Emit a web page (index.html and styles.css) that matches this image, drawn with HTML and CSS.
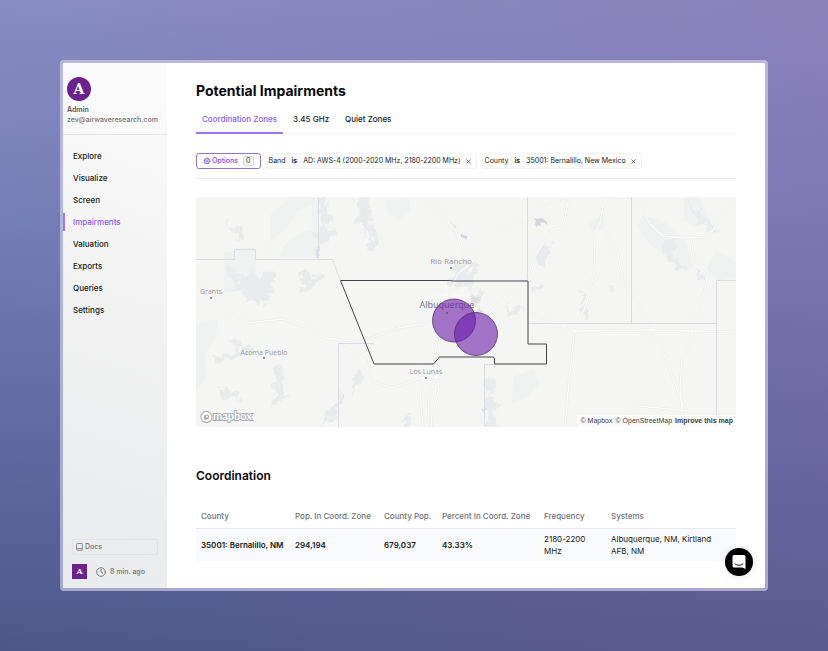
FILE: index.html
```
<!DOCTYPE html>
<html lang="en">
<head>
  <meta charset="UTF-8">
  <meta name="viewport" content="width=device-width, initial-scale=1">
  <title>Potential Impairments</title>
  <link rel="stylesheet" href="styles.css">
</head>
<body>
  <div class="window">
    <aside class="sidebar">
      <div class="account">
        <div class="avatar">A</div>
        <strong>Admin</strong>
        <span>zev@airwaveresearch.com</span>
      </div>
      <nav class="menu">
        <a href="#">Explore</a>
        <a href="#">Visualize</a>
        <a href="#">Screen</a>
        <a href="#" class="active">Impairments</a>
        <a href="#">Valuation</a>
        <a href="#">Exports</a>
        <a href="#">Queries</a>
        <a href="#">Settings</a>
      </nav>
      <div class="sidebar-bottom">
        <a href="#" class="docs">
          <svg width="7" height="8" viewBox="0 0 7 8" fill="none" stroke="currentColor" stroke-width="0.8">
            <path d="M1.500.5h4.200q.6 0 .6.6v6.200H1.600Q.6 7.300.6 6.400V1.400Q.6.5 1.500.5zM.7 6.200q.2-.7.9-.7h4.700"/>
          </svg>
          Docs
        </a>
        <div class="status">
          <div class="badge">A</div>
          <svg width="10" height="10" viewBox="0 0 10 10" fill="none" stroke="currentColor" stroke-width="0.9" stroke-linecap="round">
            <circle cx="5" cy="5" r="4.300"/>
            <path d="M5 2.300V5l1.700 1"/>
          </svg>
          <span>8 min. ago</span>
        </div>
      </div>
    </aside>

    <main class="main">
      <h1>Potential Impairments</h1>

      <nav class="tabs">
        <a href="#" class="active">Coordination Zones</a>
        <a href="#">3.45 GHz</a>
        <a href="#">Quiet Zones</a>
      </nav>

      <div class="filters">
        <button class="options">
          <svg width="8" height="8" viewBox="0 0 8 8" fill="none" stroke="currentColor">
            <circle cx="4" cy="4" r="2.900" stroke-width="1" stroke-dasharray="1.500 0.780"/>
            <circle cx="4" cy="4" r="2.400" stroke-width="0.700"/>
            <circle cx="4" cy="4" r="0.900" stroke-width="0.700"/>
          </svg>
          Options
          <span class="count">0</span>
        </button>
        <div class="chip">
          <span>Band</span><b>is</b><span>AD: AWS-4 (2000-2020 MHz, 2180-2200 MHz)</span>
          <button aria-label="Remove band filter">
            <svg width="5" height="5" viewBox="0 0 5 5" stroke="currentColor" stroke-width="0.700"><path d="M.5.5l4 4M4.500.5l-4 4"/></svg>
          </button>
        </div>
        <div class="chip">
          <span>County</span><b>is</b><span>35001: Bernalillo, New Mexico</span>
          <button aria-label="Remove county filter">
            <svg width="5" height="5" viewBox="0 0 5 5" stroke="currentColor" stroke-width="0.700"><path d="M.5.5l4 4M4.500.5l-4 4"/></svg>
          </button>
        </div>
      </div>

      <div class="map">
        <svg class="map-canvas" viewBox="0 0 540 230" role="img" aria-label="Coordination zones near Albuquerque">
          <defs>
            <filter id="rough" x="-5%" y="-5%" width="110%" height="110%">
              <feTurbulence type="fractalNoise" baseFrequency="0.120" numOctaves="3" seed="4"/>
              <feDisplacementMap in="SourceGraphic" scale="14" xChannelSelector="R" yChannelSelector="G"/>
              <feGaussianBlur stdDeviation="0.700"/>
            </filter>
          </defs>
          <rect width="540" height="230" fill="#f5f5f4"/>

          <!-- public land and lava fields -->
          <g fill="#f0f1f1">
            <path d="M95 0h27v60H82q8-22 34-27V8l-14 6-10 16-18 15-1 18H60v32H28V55h11v-4h20v11h15V18z"/>
            <path d="M190 4l22-3 3 12-13 11-10-8z"/>
            <path d="M446 17l23 8 19 17 10 28-8 4-21-14-19-17-8-14z"/>
            <path d="M488 0h17l7 18 10 18-15-9-8 3-11-6zM520 54l22 12v13l-20 5-12-10z"/>
            <path d="M392 26l15-9 2 14-14 4zM0 127l22-5-2 18-10 16-1 26-9 14z"/>
            <path d="M317 180l21-8 6 14-14 15-14 6z"/>
          </g>
          <!-- terrain shading -->
          <g fill="#e9ebed" filter="url(#rough)">
            <path d="M29 22l6 9 8-3 7 9-5 6-6-5-4-7-6-2zM28 64l12 14 8 3 6-5 7 1 1 5 10-7 10 2-6 8 3 8-8 4 2 8-11 2-6-5-5 2-3-10-11-1 5-7-12-11z"/>
            <path d="M127 0l6 8-3 8 8 3-2 8-7-3 1 11 10-3-2 9-13 4-4 18-3-2 2-22 6-14-3-12z"/>
            <path d="M103 74l8-3 1 14 9-9 7 4-11 9-6 9-8-2 5-8z"/>
            <path d="M160 3l4 10-5 10 7 6 1 11 6-3 2 8-7 5 7 4 7-8-3-16-6-4 3-12-5-11-5-5z"/>
            <path d="M258 64l8 4 7-7 5 6-7 9 8 8-4 10 3 11-8 13-7-4 9-9-1-12-7-4-9 6-4-8 6-7z"/>
            <path d="M342 52l12-5 1 12-8 8-10-1zM336 92l12-7-7 12zM253 28h6v6h-5z"/>
            <path d="M469 42l9 3 2 5-6 6 12 10 4 9-8-3-10-11-6-10z"/>
            <path d="M493 2l7 12 12 7 8 17-13-13-8-2zM501 73l9 5 1 6-9-4z"/>
            <path d="M384 92l6 8-3 11 7 4-5 9-4-10 1-8zM410 91l12-3-6 6z"/>
            <path d="M33 145l10-3 2 8-7 4zM15 158l12 3 15-6 10-7 8 1-10 9-13 4-16 5z"/>
            <path d="M80 170l3-4 4 12-3 10 4 7 8 5-8 2-9 8-4-3 5-8-5-8 5-9zM20 190l18 6 8 8-9-3-11 1z"/>
            <path d="M164 172l4 9-3 7-5 1-5 10 2-14zM140 204l6-12-4 22-6 9-9 7 3-11z"/>
            <path d="M290 180l7-1 4 8-7 10 8 7-4 16 6 10h-15l5-14-7-9 7-8-6-7z"/>
            <path d="M217 217l-7 13h-5l5-11zM229 108l9-7 7 4-5 8-8 1zM308 104l8 10 9-5-2 9-9 4z"/>
            <path d="M277 66l5 3-2 12-5 9-4-8 4-6zM283 88l3 10-5 10-3 14-4 1 4-18z"/>
          </g>
          <g fill="#d3d4e0">
            <path d="M338 21l3 1 5-1 4 3 2 4-5-3-3 1 1 3-3-1-1 2-2-3 1-3z"/>
            <path d="M265.500 37l6 2.500-1 2.500-6-2.500z"/>
          </g>
          <g fill="#dddee6" filter="url(#rough)">
            <path d="M276 98l6 2-4 9-3-4zM282 112l3-1-6 13-2-2zM121 50h3l-2 16-3-4zM287 211l4-4 1 5-5 4zM145 199l2-4-2 12-3 4z"/>
          </g>

          <!-- roads -->
          <g fill="none" stroke="#e9eaea" stroke-width="2.400">
            <path d="M0 84l14 15 22 18 16 9 35-4 20 7 22 12 35 4 38-14 25-4 22-14M228 0l14 14 18 20 5 18 12 12-16 14-8 22-4 26-8 18-3 22 5 26-8 30 2 22"/>
            <path d="M275 62q20-20 38-31l20-9 18-15 20-7M373 0l-6 30-12 3-18 30-6 18-20 16-22 24-17 16"/>
            <path d="M402 0l10 5 10-5h15l9 12 8 15 13 12 22 2 24-1 16-28 10-10M409 1l-5 24 17 28 6 30 18 28 20 38 25 67M404 25l-6 15 1 32-7 30-14 36-5 46-4 46"/>
            <path d="M495 42l3 18 14 15-4 22-12 28 0 20-10 15-2 30 3 34M327 113l50 21 79-1 84 2M142 144l30 16 4 24 20 7 28-10 20-1"/>
            <path d="M224 162l6 12-6 24 3 32M243 158l-1 18-9 22-1 30M429 220l14-11 50 5"/>
          </g>
          <g fill="none" stroke="#fbfbfa" stroke-width="1.300">
            <path d="M0 84l14 15 22 18 16 9 35-4 20 7 22 12 35 4 38-14 25-4 22-14M228 0l14 14 18 20 5 18 12 12-16 14-8 22-4 26-8 18-3 22 5 26-8 30 2 22"/>
            <path d="M275 62q20-20 38-31l20-9 18-15 20-7M373 0l-6 30-12 3-18 30-6 18-20 16-22 24-17 16"/>
            <path d="M402 0l10 5 10-5h15l9 12 8 15 13 12 22 2 24-1 16-28 10-10M409 1l-5 24 17 28 6 30 18 28 20 38 25 67M404 25l-6 15 1 32-7 30-14 36-5 46-4 46"/>
            <path d="M495 42l3 18 14 15-4 22-12 28 0 20-10 15-2 30 3 34M327 113l50 21 79-1 84 2M142 144l30 16 4 24 20 7 28-10 20-1"/>
            <path d="M224 162l6 12-6 24 3 32M243 158l-1 18-9 22-1 30M429 220l14-11 50 5"/>
          </g>
          <path d="M245 90h30M240 98h36M235 106h42M250 86v40M258 88v34M267 86v24M274 88v22" fill="none" stroke="#fafaf9" stroke-width="0.800"/>

          <!-- county lines -->
          <g fill="none" stroke="#dcdde2" stroke-width="1">
            <path d="M0 62.500h38.500v-10h21v10h77l8 21M122.500 0v62M331.500 0v83M435.500 0v126M332 126.500h188M520.500 230V83.500H540M178 146.500h-35.500V230M298 167.500h-9.500V230"/>
          </g>
          <path d="M144.500 83.500h109l4 .5h74.500v63h18.500v20h-52v-5q0-2-2-2h-53l-6 7h-59.500z" fill="none" stroke="#44444a" stroke-width="1"/>

          <g class="places">
            <text x="255" y="67" class="town">Rio Rancho</text>
            <text x="251" y="111" class="city">Albuquerque</text>
            <text x="15" y="97">Grants</text>
            <text x="68" y="158">Acoma Pueblo</text>
            <text x="230" y="177">Los Lunas</text>
          </g>
          <g fill="#606068">
            <circle cx="255" cy="71" r="0.900"/>
            <circle cx="251" cy="116" r="0.900"/>
            <circle cx="15" cy="101" r="0.900"/>
            <circle cx="68" cy="161" r="0.900"/>
            <circle cx="230" cy="181" r="0.900"/>
          </g>

          <!-- coordination zones -->
          <g fill="#6a1ba8" fill-opacity="0.600" stroke="#4a2368" stroke-opacity="0.700" stroke-width="1">
            <circle cx="258" cy="123.500" r="21.500"/>
            <circle cx="280" cy="137" r="21.500"/>
          </g>

          <g class="logo">
            <circle cx="10.500" cy="220" r="5.600" fill="#fff" stroke="#b4b4b8" stroke-width="1.200"/>
            <path d="M7.800 222.600q-.5-5 3-5.200a2.500 2.500 0 0 1 2.400 2.600q-.3 3-5.400 2.600z" fill="#a9a9ae"/>
            <path d="M11 218.200l.5 1 1 .5-1 .5-.5 1-.5-1-1-.5 1-.5z" fill="#fff"/>
            <text x="17" y="223">mapbox</text>
          </g>
        </svg>
        <div class="credits">
          <a href="#">© Mapbox</a>
          <a href="#">© OpenStreetMap</a>
          <a href="#" class="improve">Improve this map</a>
        </div>
      </div>

      <h2>Coordination</h2>
      <table>
        <thead>
          <tr>
            <th class="col-county">County</th>
            <th class="col-zone">Pop. In Coord. Zone</th>
            <th class="col-pop">County Pop.</th>
            <th class="col-percent">Percent In Coord. Zone</th>
            <th class="col-freq">Frequency</th>
            <th>Systems</th>
          </tr>
        </thead>
        <tbody>
          <tr>
            <td class="strong">35001: Bernalillo, NM</td>
            <td class="strong">294,194</td>
            <td class="strong">679,037</td>
            <td class="strong">43.33%</td>
            <td>2180-2200 MHz</td>
            <td>Albuquerque, NM, Kirtland AFB, NM</td>
          </tr>
        </tbody>
      </table>
    </main>

    <button class="chat" aria-label="Open chat">
      <svg width="14" height="16" viewBox="0 0 14 16">
        <path d="M2 1h10q1.500 0 1.500 1.500V15l-3-1.500H2Q.5 13.500.5 12V2.500Q.5 1 2 1z" fill="#fff"/>
        <path d="M3 10q4 2.800 8 0" fill="none" stroke="#000" stroke-width="0.900" stroke-linecap="round"/>
      </svg>
    </button>
  </div>
</body>
</html>
```
FILE: styles.css
```
* {
  box-sizing: border-box;
}
body {
  margin: 0;
  min-height: 100vh;
  padding: 60px;
  display: flex;
  font-family: Inter, "Liberation Sans", sans-serif;
  font-size: 8px;
  line-height: 12px;
  color: #18181b;
  background:
    linear-gradient(90deg, rgba(160, 130, 190, 0) 0%, rgba(165, 90, 165, 0.2) 100%),
    linear-gradient(180deg, #868cc2 0%, #7780b8 30%, #5f6ba3 65%, #4b598a 100%);
}
a {
  color: inherit;
  text-decoration: none;
}
button {
  font: inherit;
  cursor: pointer;
}
svg {
  display: block;
  flex: none;
}
.window {
  position: relative;
  flex: 1;
  min-width: 0;
  display: flex;
  border: 3px solid rgba(222, 219, 242, 0.6);
  border-radius: 4px;
  background: #fff;
  background-clip: padding-box;
}

/* sidebar */
.sidebar {
  flex: none;
  width: 104px;
  display: flex;
  flex-direction: column;
  background: linear-gradient(20deg, #e9ebed 0%, #f2f2f2 55%, #fcfcfc 100%);
}
.account {
  display: flex;
  flex-direction: column;
  padding: 14px 4px 9px;
  font-size: 7px;
  line-height: 10px;
  font-weight: 500;
  color: #71717a;
  border-bottom: 1px solid #e4e4e7;
}
.account strong {
  font-weight: 600;
  color: #52525b;
}
.avatar {
  width: 24px;
  height: 24px;
  margin-bottom: 4px;
  border-radius: 50%;
  background: #6b218e;
  color: #fff;
  font: bold 14px/24px "DejaVu Serif", serif;
  text-align: center;
}
.menu {
  display: flex;
  flex-direction: column;
  gap: 4px;
  padding-top: 12px;
}
.menu a {
  padding-left: 8px;
  border-left: 2px solid transparent;
  line-height: 18px;
  font-weight: 500;
}
.menu .active {
  border-color: #9f75f0;
  color: #8b5cf6;
}
.sidebar-bottom {
  margin-top: auto;
  padding: 0 9px 9px;
  font-size: 7px;
  font-weight: 500;
  color: #71717a;
}
.docs {
  display: flex;
  align-items: center;
  gap: 2px;
  height: 16px;
  padding-left: 3px;
  border: 1px solid #e2e3e5;
  border-radius: 2px;
}
.status {
  display: flex;
  align-items: center;
  margin-top: 9px;
}
.status span {
  margin-left: 4px;
}
.badge {
  width: 15px;
  height: 15px;
  margin-right: 9px;
  background: #6b218e;
  color: #fff;
  font: bold 8px/15px "DejaVu Serif", serif;
  text-align: center;
}

/* content */
.main {
  flex: 1;
  min-width: 0;
  padding: 18px 29px 27px;
}
h1 {
  margin: 0;
  font-size: 14px;
  line-height: 20px;
  font-weight: 700;
  color: #09090b;
}
.tabs {
  display: flex;
  gap: 4px;
  margin-top: 8px;
  border-bottom: 1px solid #f4f4f5;
}
.tabs a {
  padding: 4px 6px 6px;
  font-weight: 500;
  border-bottom: 2px solid transparent;
}
.tabs .active {
  margin-bottom: -1px;
  color: #8b5cf6;
  border-color: #9f75f0;
}
.filters {
  display: flex;
  align-items: center;
  gap: 5px;
  padding: 19px 0 9px;
  font-size: 7px;
  border-bottom: 1px solid #ececee;
}
.options {
  display: flex;
  align-items: center;
  gap: 1px;
  height: 16px;
  padding: 0 6px;
  border: 1px solid #8f78cc;
  border-radius: 3px;
  background: #fff;
  color: #7c4fe0;
  font-weight: 500;
}
.count {
  margin-left: 4px;
  padding: 0 2px;
  line-height: 8px;
  border: 1px solid #d4d4d8;
  border-radius: 2px;
  color: #52525b;
}
.chip {
  display: flex;
  align-items: center;
  height: 16px;
  border: 1px solid #f4f4f5;
  border-radius: 2px;
  white-space: nowrap;
}
.chip span,
.chip b {
  padding: 0 3px 0 2px;
  line-height: 14px;
}
.chip b {
  border: solid #f6f6f7;
  border-width: 0 1px;
  font-weight: 600;
}
.chip button {
  padding: 2px 5px 2px 2px;
  border: 0;
  background: none;
  color: #3f3f46;
}

/* map */
.map {
  position: relative;
  margin-top: 18px;
  border-radius: 3px;
  overflow: hidden;
}
.map-canvas {
  width: 100%;
  height: auto;
}
.places text {
  font-family: "Open Sans", sans-serif;
  font-size: 7px;
  text-anchor: middle;
  fill: #96969f;
}
.places .town {
  font-size: 8px;
}
.places .city {
  font-size: 9px;
  fill: #74747c;
}
.logo text {
  font: bold 11px Lato, sans-serif;
  fill: #fff;
  stroke: #adadb2;
  stroke-width: 2px;
  paint-order: stroke;
}
.credits {
  position: absolute;
  right: 0;
  bottom: 0;
  display: flex;
  gap: 3px;
  padding: 0 3px;
  font: 7px/12px "Liberation Sans", sans-serif;
  color: #3f3f46;
  background: rgba(255, 255, 255, 0.6);
}
.improve {
  font-weight: bold;
}

/* table */
h2 {
  margin: 40px 0 20px;
  font-size: 12px;
  line-height: 18px;
  font-weight: 600;
  color: #09090b;
}
table {
  width: 100%;
  table-layout: fixed;
  border-collapse: collapse;
}
th,
td {
  padding: 4px 5px;
  text-align: left;
  font-weight: 400;
}
th {
  padding: 5px 5px 6px;
  font-weight: 500;
  color: #71717a;
  white-space: nowrap;
  border-bottom: 1px solid #e8e8eb;
}
td {
  background: #f9fafb;
}
.strong {
  font-weight: 600;
  white-space: nowrap;
}
.col-county {
  width: 94px;
}
.col-zone {
  width: 89px;
}
.col-pop {
  width: 58px;
}
.col-percent {
  width: 102px;
}
.col-freq {
  width: 67px;
}

.chat {
  position: absolute;
  right: 12px;
  bottom: 12px;
  width: 28px;
  height: 28px;
  display: grid;
  place-items: center;
  padding: 0;
  border: 0;
  border-radius: 50%;
  background: #000;
  box-shadow: 0 1px 10px rgba(0, 0, 0, 0.1);
}
```
